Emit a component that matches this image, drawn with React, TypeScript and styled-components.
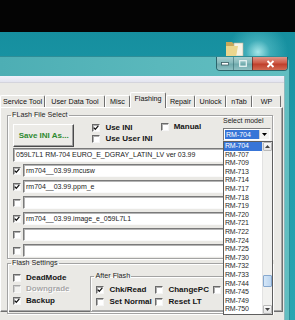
import React from 'react';
import styled, { createGlobalStyle } from 'styled-components';

const models = [
  'RM-704', 'RM-707', 'RM-709', 'RM-713', 'RM-714', 'RM-717', 'RM-718',
  'RM-719', 'RM-720', 'RM-721', 'RM-722', 'RM-724', 'RM-725', 'RM-730',
  'RM-732', 'RM-733', 'RM-744', 'RM-745', 'RM-749', 'RM-750',
];

const tabs = [
  { label: 'Service Tool', width: 45 },
  { label: 'User Data Tool', width: 60 },
  { label: 'Misc', width: 25 },
  { label: 'Flashing', width: 36, active: true },
  { label: 'Repair', width: 29 },
  { label: 'Unlock', width: 31 },
  { label: 'nTab', width: 26 },
  { label: 'WP', width: 29 },
];

const fileRows = [
  { checked: true, value: 'rm704__03.99.mcusw' },
  { checked: true, value: 'rm704__03.99.ppm_e' },
  { checked: false, value: '' },
  { checked: true, value: 'rm704__03.99.image_e_059L7L1' },
  { checked: false, value: '' },
  { checked: false, value: '' },
];

const GlobalStyle = createGlobalStyle`
  html, body {
    margin: 0;
    padding: 0;
    background: #000;
  }

  body {
    font-family: "Liberation Sans", Arial, sans-serif;
  }

  * {
    box-sizing: border-box;
  }
`;

const Check = ({ checked, disabled }: { checked?: boolean; disabled?: boolean }) => (
  <Box $disabled={disabled}>
    {checked && (
      <svg width="6" height="6" viewBox="0 0 6 6">
        <path d="M0.7 2.6 L2.3 4.3 L5.3 0.8" fill="none" stroke="#111" strokeWidth="1.3" />
      </svg>
    )}
  </Box>
);

const App = () => {
  return (
    <>
      <GlobalStyle />
      <Screen>
        <TopBlack />
        <Desktop>
          <Folder width="20" height="17" viewBox="0 0 20 17">
            <path d="M1 2 H7 L9 4 H17 V17 H1 Z" fill="#c9a85a" />
            <rect x="9" y="3" width="9" height="13" fill="#f7f3e6" stroke="#bdb39a" strokeWidth="0.6" />
            <path d="M1 6 H13 L11 17 H1 Z" fill="#ecd68e" />
          </Folder>

          <Window>
            <TitleBar>
              <CaptionButtons>
                <CaptionButton $w={16}>
                  <svg width="8" height="4" viewBox="0 0 8 4">
                    <rect x="0.5" y="0.5" width="7" height="2.5" fill="#fff" stroke="#3a5a60" strokeWidth="0.8" />
                  </svg>
                </CaptionButton>
                <CaptionButton $w={19}>
                  <svg width="8" height="7" viewBox="0 0 8 7">
                    <rect x="0.7" y="0.7" width="6.6" height="5.6" fill="none" stroke="#e8f4f4" strokeWidth="1.2" />
                  </svg>
                </CaptionButton>
                <CaptionButton $w={35} $close>
                  <svg width="9" height="8" viewBox="0 0 9 8">
                    <path d="M1.5 1 L7.5 7 M7.5 1 L1.5 7" stroke="#fff" strokeWidth="1.8" />
                  </svg>
                </CaptionButton>
              </CaptionButtons>
            </TitleBar>

            <ClientFrame>
              <MenuStrip />
              <Body>
                <TabStrip>
                  {tabs.map((tab) => (
                    <Tab key={tab.label} $w={tab.width} $active={tab.active}>
                      {tab.label}
                    </Tab>
                  ))}
                </TabStrip>

                <Panel>
                  <Group $w={266}>
                    <Legend>FLash File Select</Legend>
                    <TopRow>
                      <SaveButton>Save INI As...</SaveButton>
                      <CheckColumn>
                        <Option>
                          <Check checked />
                          <OptionLabel>Use INI</OptionLabel>
                        </Option>
                        <Option>
                          <Check />
                          <OptionLabel>Use User INI</OptionLabel>
                        </Option>
                      </CheckColumn>
                      <ManualColumn>
                        <Option>
                          <Check />
                          <OptionLabel>Manual</OptionLabel>
                        </Option>
                      </ManualColumn>
                      <ModelColumn>
                        <ModelLabel>Select model</ModelLabel>
                        <Combo>
                          <ComboValue>RM-704</ComboValue>
                          <ComboButton>
                            <svg width="5" height="3" viewBox="0 0 5 3">
                              <path d="M0 0 H5 L2.5 3 Z" fill="#000" />
                            </svg>
                          </ComboButton>
                          <DropList>
                            <Items>
                              {models.map((m, i) => (
                                <Item key={m} $selected={i === 0}>
                                  {m}
                                </Item>
                              ))}
                            </Items>
                            <ScrollBar>
                              <ScrollArrow>
                                <svg width="5" height="3" viewBox="0 0 5 3">
                                  <path d="M0 3 H5 L2.5 0 Z" fill="#444" />
                                </svg>
                              </ScrollArrow>
                              <ScrollTrack>
                                <Thumb style={{ marginTop: 124 }} />
                              </ScrollTrack>
                              <ScrollArrow>
                                <svg width="5" height="3" viewBox="0 0 5 3">
                                  <path d="M0 0 H5 L2.5 3 Z" fill="#444" />
                                </svg>
                              </ScrollArrow>
                            </ScrollBar>
                          </DropList>
                        </Combo>
                      </ModelColumn>
                    </TopRow>

                    <Field $h={14}>059L7L1 RM-704 EURO_E_DGRAY_LATIN_LV ver 03.99</Field>

                    <FileRows>
                      {fileRows.map((row, i) => (
                        <FileRow key={i}>
                          <Check checked={row.checked} />
                          <Field $h={13}>{row.value}</Field>
                        </FileRow>
                      ))}
                    </FileRows>
                  </Group>

                  <Group $w={266}>
                    <Legend>Flash Settings</Legend>
                    <SettingsRow>
                      <SettingsColumn>
                        <SettingLine>
                          <Option>
                            <Check />
                            <OptionLabel>DeadMode</OptionLabel>
                          </Option>
                        </SettingLine>
                        <SettingLine>
                          <Option>
                            <Check disabled />
                            <OptionLabel $disabled>Downgrade</OptionLabel>
                          </Option>
                        </SettingLine>
                        <SettingLine>
                          <Option>
                            <Check checked />
                            <OptionLabel>Backup</OptionLabel>
                          </Option>
                        </SettingLine>
                      </SettingsColumn>

                      <AfterGroup>
                        <Legend>After Flash</Legend>
                        <AfterGrid>
                          <Option>
                            <Check checked />
                            <OptionLabel>Chk/Read</OptionLabel>
                          </Option>
                          <Option>
                            <Check />
                            <OptionLabel>ChangePC</OptionLabel>
                          </Option>
                          <Option>
                            <Check />
                          </Option>
                          <Option>
                            <Check />
                            <OptionLabel>Set Normal</OptionLabel>
                          </Option>
                          <Option>
                            <Check />
                            <OptionLabel>Reset LT</OptionLabel>
                          </Option>
                        </AfterGrid>
                      </AfterGroup>
                    </SettingsRow>
                  </Group>
                </Panel>
              </Body>
            </ClientFrame>
          </Window>
        </Desktop>
      </Screen>
    </>
  );
};

export default App;

const Screen = styled.div`
  width: 295px;
  height: 320px;
  overflow: hidden;
  display: flex;
  flex-direction: column;
  background: #000;
`;

const TopBlack = styled.div`
  height: 32px;
  flex: none;
  background: #040404;
`;

const Desktop = styled.div`
  position: relative;
  flex: 1;
  min-height: 0;
  display: flex;
  flex-direction: column;
  padding: 24px 5px 0 0;
  background:
    radial-gradient(circle at 258px 20px, rgba(190, 245, 245, 0.85) 0, rgba(110, 205, 212, 0.45) 12px, rgba(30, 150, 165, 0) 30px),
    linear-gradient(180deg, #168f9f 0%, #1f9cab 40%, #2aa6b2 100%);
`;

const Folder = styled.svg`
  position: absolute;
  left: 225px;
  top: 8px;
`;

const Window = styled.div`
  position: relative;
  z-index: 1;
  flex: 1;
  display: flex;
  flex-direction: column;
  border-top: 1px solid #2e8d97;
  border-right: 1px solid #2e8d97;
  border-top-right-radius: 6px;
  background: linear-gradient(90deg, #4daeb4 0%, #5ab8bc 55%, #62bec1 100%);
`;

const TitleBar = styled.div`
  height: 19px;
  flex: none;
  display: flex;
  justify-content: flex-end;
  align-items: flex-start;
  padding-right: 1px;
`;

const CaptionButtons = styled.div`
  display: flex;
  height: 14px;
  border: 1px solid rgba(28, 72, 80, 0.75);
  border-top: none;
  border-radius: 0 0 4px 4px;
  overflow: hidden;
`;

const CaptionButton = styled.div<{ $w: number; $close?: boolean }>`
  width: ${(p) => p.$w}px;
  display: flex;
  align-items: center;
  justify-content: center;
  border-left: ${(p) => (p.$close ? '1px solid rgba(60, 30, 30, 0.6)' : '1px solid rgba(40, 90, 95, 0.5)')};
  background: ${(p) =>
    p.$close
      ? 'linear-gradient(180deg, #e0978a 0%, #cf5c48 45%, #bf3f2c 55%, #d26a52 100%)'
      : 'linear-gradient(180deg, #a9cfd0 0%, #85b9bb 45%, #6ea9ac 55%, #8ec0c2 100%)'};

  &:first-child {
    border-left: none;
  }
`;

const ClientFrame = styled.div`
  flex: 1;
  display: flex;
  flex-direction: column;
  margin-right: 4px;
  border-right: 1px solid #8fb8bd;
`;

const MenuStrip = styled.div`
  height: 7px;
  flex: none;
  background: linear-gradient(180deg, #f1f1fa 0%, #e3e4ef 100%);
  border-bottom: 1px solid #d4d4dc;
`;

const Body = styled.div`
  flex: 1;
  background: #eae9e5;
  padding: 9px 1px 0 0;
`;

const TabStrip = styled.div`
  display: flex;
  align-items: flex-end;
  height: 15px;
`;

const Tab = styled.div<{ $w: number; $active?: boolean }>`
  position: relative;
  z-index: ${(p) => (p.$active ? 2 : 1)};
  width: ${(p) => p.$w}px;
  height: ${(p) => (p.$active ? 16 : 12)}px;
  margin-bottom: ${(p) => (p.$active ? -1 : 0)}px;
  padding-top: 1px;
  border-top: 1px solid #fff;
  border-left: 1px solid #fff;
  border-right: 1px solid #6f6f6f;
  border-radius: 2px 2px 0 0;
  background: #eae9e5;
  font-size: 7.2px;
  line-height: 10px;
  text-align: center;
  white-space: nowrap;
  color: #111;
`;

const Panel = styled.div`
  height: 205px;
  padding: 3px 0 0 6px;
  border-top: 1px solid #fff;
  border-left: 1px solid #fff;
  border-right: 1px solid #6f6f6f;
  border-bottom: 1px solid #6f6f6f;
  box-shadow: inset -1px -1px 0 #a7a7a7;
  display: flex;
  flex-direction: column;
`;

const Group = styled.fieldset<{ $w: number }>`
  width: ${(p) => p.$w}px;
  margin: 0;
  padding: 4px 1px 1px 5px;
  min-width: 0;
  border: 1px solid #a3a3a3;
  box-shadow: inset 1px 1px 0 #fff, 1px 1px 0 #fff;
`;

const Legend = styled.legend`
  margin-left: -2px;
  padding: 0 1px;
  font-size: 7.2px;
  line-height: 8px;
  color: #222;
`;

const TopRow = styled.div`
  display: flex;
  align-items: flex-start;
  height: 25px;
`;

const SaveButton = styled.div`
  width: 62px;
  height: 23px;
  margin-top: 1px;
  display: flex;
  align-items: center;
  justify-content: center;
  background: #ecebe7;
  border-top: 1px solid #fff;
  border-left: 1px solid #fff;
  border-right: 1px solid #4a4a4a;
  border-bottom: 1px solid #4a4a4a;
  box-shadow: inset -1px -1px 0 #9e9e9e;
  font-size: 8px;
  font-weight: 700;
  color: #2f8a2f;
  white-space: nowrap;
`;

const CheckColumn = styled.div`
  width: 69px;
  margin-left: 18px;
  padding-top: 1px;
  display: flex;
  flex-direction: column;
  gap: 3px;
`;

const ManualColumn = styled.div`
  width: 63px;
`;

const Option = styled.div`
  display: flex;
  align-items: center;
  gap: 5px;
  height: 8px;
`;

const Box = styled.span<{ $disabled?: boolean }>`
  width: 8px;
  height: 8px;
  flex: none;
  display: flex;
  align-items: center;
  justify-content: center;
  background: ${(p) => (p.$disabled ? '#f2f2f0' : '#fff')};
  border-top: 1px solid ${(p) => (p.$disabled ? '#a8a8a8' : '#6a6a6a')};
  border-left: 1px solid ${(p) => (p.$disabled ? '#a8a8a8' : '#6a6a6a')};
  border-right: 1px solid #f6f6f6;
  border-bottom: 1px solid #f6f6f6;
  box-shadow: inset 1px 1px 0 ${(p) => (p.$disabled ? '#d0d0d0' : '#b0b0b0')};
`;

const OptionLabel = styled.span<{ $disabled?: boolean }>`
  font-size: 8px;
  line-height: 8px;
  font-weight: 700;
  white-space: nowrap;
  color: ${(p) => (p.$disabled ? '#a6a6a6' : '#151515')};
  text-shadow: ${(p) => (p.$disabled ? '1px 1px 0 #fff' : 'none')};
`;

const ModelColumn = styled.div`
  margin-top: -7px;
  display: flex;
  flex-direction: column;
  gap: 3px;
`;

const ModelLabel = styled.div`
  font-size: 7px;
  line-height: 9px;
  color: #222;
  white-space: nowrap;
`;

const Combo = styled.div`
  position: relative;
  width: 48px;
  height: 13px;
  display: flex;
  padding: 1px;
  background: #fff;
  border-top: 1px solid #7c7c7c;
  border-left: 1px solid #7c7c7c;
  border-right: 1px solid #f4f4f4;
  border-bottom: 1px solid #f4f4f4;
`;

const ComboValue = styled.div`
  flex: 1;
  padding-left: 1px;
  background: #3875d7;
  color: #fff;
  font-size: 7px;
  line-height: 9px;
`;

const ComboButton = styled.div`
  width: 10px;
  display: flex;
  align-items: center;
  justify-content: center;
  background: #f4f4f2;
  border-left: 1px solid #d0d0d0;
`;

const DropList = styled.div`
  position: absolute;
  z-index: 5;
  top: 12px;
  left: -1px;
  width: 50px;
  height: 174px;
  display: flex;
  background: #fff;
  border: 1px solid #5e5e5e;
`;

const Items = styled.div`
  flex: 1;
  display: flex;
  flex-direction: column;
`;

const Item = styled.div<{ $selected?: boolean }>`
  height: 8.6px;
  padding-left: 1px;
  font-size: 7px;
  line-height: 8.6px;
  letter-spacing: -0.2px;
  white-space: nowrap;
  color: ${(p) => (p.$selected ? '#fff' : '#2a2a2a')};
  background: ${(p) => (p.$selected ? '#3875d7' : 'transparent')};
`;

const ScrollBar = styled.div`
  width: 10px;
  display: flex;
  flex-direction: column;
  background: #f1f1ef;
  border-left: 1px solid #e2e2e2;
`;

const ScrollArrow = styled.div`
  height: 9px;
  flex: none;
  display: flex;
  align-items: center;
  justify-content: center;
  background: linear-gradient(180deg, #f9f9f9, #e4e4e4);
  border: 1px solid #b9b9b9;
  border-radius: 1px;
`;

const ScrollTrack = styled.div`
  flex: 1;
  display: flex;
  flex-direction: column;
`;

const Thumb = styled.div`
  height: 12px;
  background: linear-gradient(90deg, #d4e6f8, #bcd5ef);
  border: 1px solid #86a8cf;
  border-radius: 1px;
`;

const Field = styled.div<{ $h: number }>`
  flex: 1;
  height: ${(p) => p.$h}px;
  padding-left: 2px;
  background: #fff;
  border-top: 1px solid #7a7a7a;
  border-left: 1px solid #7a7a7a;
  border-right: 1px solid #fafafa;
  border-bottom: 1px solid #fafafa;
  box-shadow: inset 1px 1px 0 #b4b4b4;
  font-size: 7px;
  line-height: ${(p) => p.$h - 2}px;
  color: #1a1a1a;
  white-space: nowrap;
  overflow: hidden;
`;

const FileRows = styled.div`
  margin-top: 2px;
  display: flex;
  flex-direction: column;
  gap: 3px;
`;

const FileRow = styled.div`
  display: flex;
  align-items: center;
  gap: 2px;
  height: 13px;
`;

const SettingsRow = styled.div`
  display: flex;
  align-items: flex-start;
  padding-top: 1px;
`;

const SettingsColumn = styled.div`
  width: 79px;
  display: flex;
  flex-direction: column;
`;

const SettingLine = styled.div`
  height: 11.5px;
  display: flex;
  align-items: center;
`;

const AfterGroup = styled.fieldset`
  width: 184px;
  margin: 0;
  padding: 4px 1px 3px 5px;
  min-width: 0;
  border: 1px solid #a3a3a3;
  box-shadow: inset 1px 1px 0 #fff, 1px 1px 0 #fff;
`;

const AfterGrid = styled.div`
  display: grid;
  grid-template-columns: 59px 58px 1fr;
  grid-auto-rows: 12px;
  align-items: center;
`;
